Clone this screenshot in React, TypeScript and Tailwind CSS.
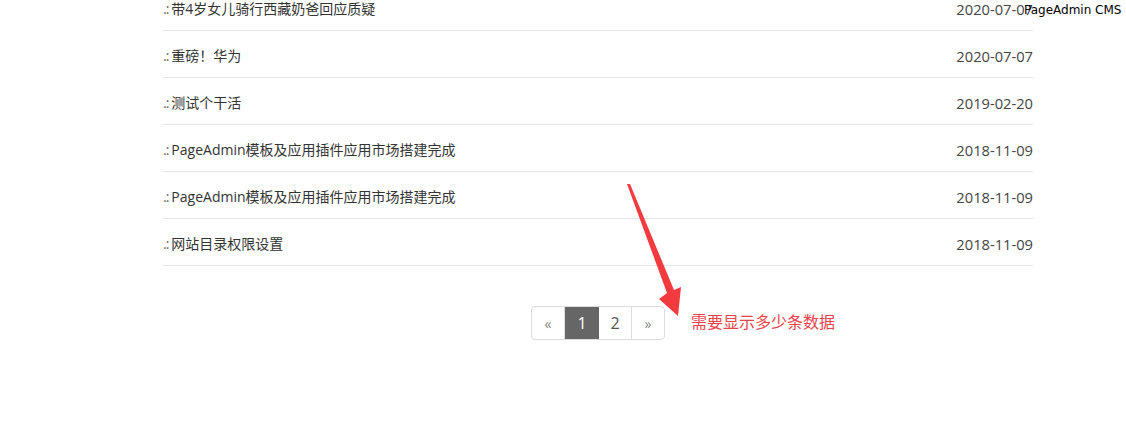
import React from 'react';

const rows = [
  { title: '带4岁女儿骑行西藏奶爸回应质疑', date: '2020-07-07' },
  { title: '重磅！华为', date: '2020-07-07' },
  { title: '测试个干活', date: '2019-02-20' },
  { title: 'PageAdmin模板及应用插件应用市场搭建完成', date: '2018-11-09' },
  { title: 'PageAdmin模板及应用插件应用市场搭建完成', date: '2018-11-09' },
  { title: '网站目录权限设置', date: '2018-11-09' },
];

const font = { fontFamily: '"Open Sans", "Noto Sans CJK SC", sans-serif' };

function App() {
  return (
    <div className="relative w-[1126px] h-[424px] overflow-hidden bg-white text-[#333]" style={font}>
      <div className="ml-[163px] w-[870px]">
        <ul className="-mt-[16px]">
          {rows.map((r, i) => (
            <li
              key={i}
              className="flex justify-between items-center h-[47px] pt-[16px] pb-[12px] border-b border-[#e5e5e5] text-[14px] leading-[18px]"
            >
              <span>
                <span className="text-[#666] tracking-[-1px] mr-[3px]">.:</span>
                {r.title}
              </span>
              <span className="text-[#444] text-[14.7px]">{r.date}</span>
            </li>
          ))}
        </ul>

        <div className="flex justify-center mt-[40px]">
          <div className="flex h-[34px] border border-[#ddd] rounded-[4px] overflow-hidden text-[14px]">
            <a className="w-[33px] flex items-center justify-center text-[#888] text-[14px] border-r border-[#ddd]">«</a>
            <a className="w-[34px] flex items-center justify-center bg-[#666] text-white text-[16px]">1</a>
            <a className="w-[33px] flex items-center justify-center text-[#555] text-[16px] border-r border-[#ddd]">2</a>
            <a className="w-[32px] flex items-center justify-center text-[#888] text-[14px]">»</a>
          </div>
        </div>
      </div>

      {/* annotation */}
      <span
        className="absolute left-[691px] top-[310px] text-[16px] leading-[22px] text-[#e8424a]"
        style={{ fontFamily: '"Noto Sans CJK SC", sans-serif' }}
      >
        需要显示多少条数据
      </span>
      <svg className="absolute left-0 top-0" width="1126" height="424">
        <polygon points="627,184 630,184 674,290 681,287 678,316 659,299 667,293" fill="#f23a3f" />
      </svg>

      <div className="absolute left-[1024px] top-[2px] text-[12px] leading-[16px] text-black" style={{ fontFamily: '"DejaVu Sans", sans-serif' }}>
        PageAdmin CMS
      </div>
    </div>
  );
}

export default App;
